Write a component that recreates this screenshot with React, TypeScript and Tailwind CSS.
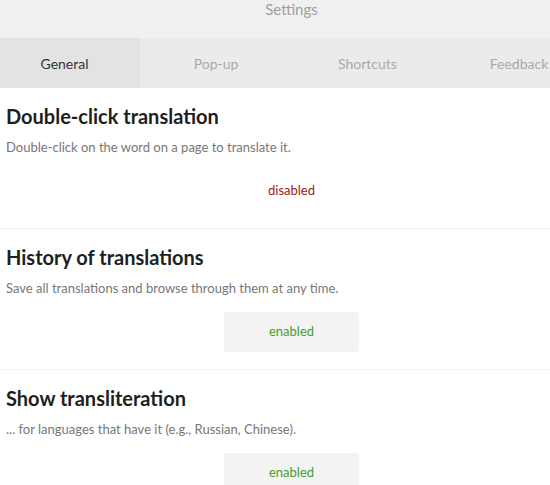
import React from 'react'

const tabs = ['General', 'Pop-up', 'Shortcuts', 'Feedback']

const sections = [
    { title: 'Double-click translation', desc: 'Double-click on the word on a page to translate it.', enabled: false },
    { title: 'History of translations', desc: 'Save all translations and browse through them at any time.', enabled: true },
    { title: 'Show transliteration', desc: '... for languages that have it (e.g., Russian, Chinese).', enabled: true },
]

export default function App() {
    return (
        <div className="w-[550px] h-[485px] overflow-hidden bg-white" style={{ fontFamily: 'Lato, "Open Sans", sans-serif' }}>
            <div className="w-[583px]">
                {/* Header */}
                <div className="h-[38px] bg-[#f0f0f0] flex justify-center">
                    <span className="text-[15px] leading-[19px] text-[#a0a0a0]">Settings</span>
                </div>

                {/* Tabs */}
                <div className="h-[50px] bg-[#ebebeb] flex whitespace-nowrap">
                    {tabs.map((tab, i) => (
                        <div
                            key={tab}
                            className={
                                i === 0
                                    ? 'w-[140px] mr-[11.5px] shrink-0 flex items-center justify-center pr-[11px] bg-[#e3e3e3] text-[14px] text-[#333]'
                                    : 'w-[140px] mr-[11.5px] shrink-0 flex items-center justify-center pr-[11px] text-[14px] text-[#aaaaaa]'
                            }
                        >
                            {tab}
                        </div>
                    ))}
                </div>

                {/* Sections */}
                {sections.map((s) => (
                    <div key={s.title} className="border-b border-[#f2f2f2] px-[6px] pt-[15px] pb-[17px]">
                        <h2 className="text-[20px] font-bold text-[#1e1e1e] leading-[26px]">{s.title}</h2>
                        <p className="mt-[9px] text-[13px] text-[#777] leading-[18px]">{s.desc}</p>
                        <div className="mt-[15px] flex justify-center">
                            <div
                                className={
                                    s.enabled
                                        ? 'w-[135px] h-[40px] flex items-center justify-center bg-[#f3f3f3] text-[13px] text-[#44a02a] rounded-[2px]'
                                        : 'w-[135px] h-[40px] flex items-center justify-center text-[13px] text-[#a01818]'
                                }
                            >
                                {s.enabled ? 'enabled' : 'disabled'}
                            </div>
                        </div>
                    </div>
                ))}
            </div>
        </div>
    )
}
